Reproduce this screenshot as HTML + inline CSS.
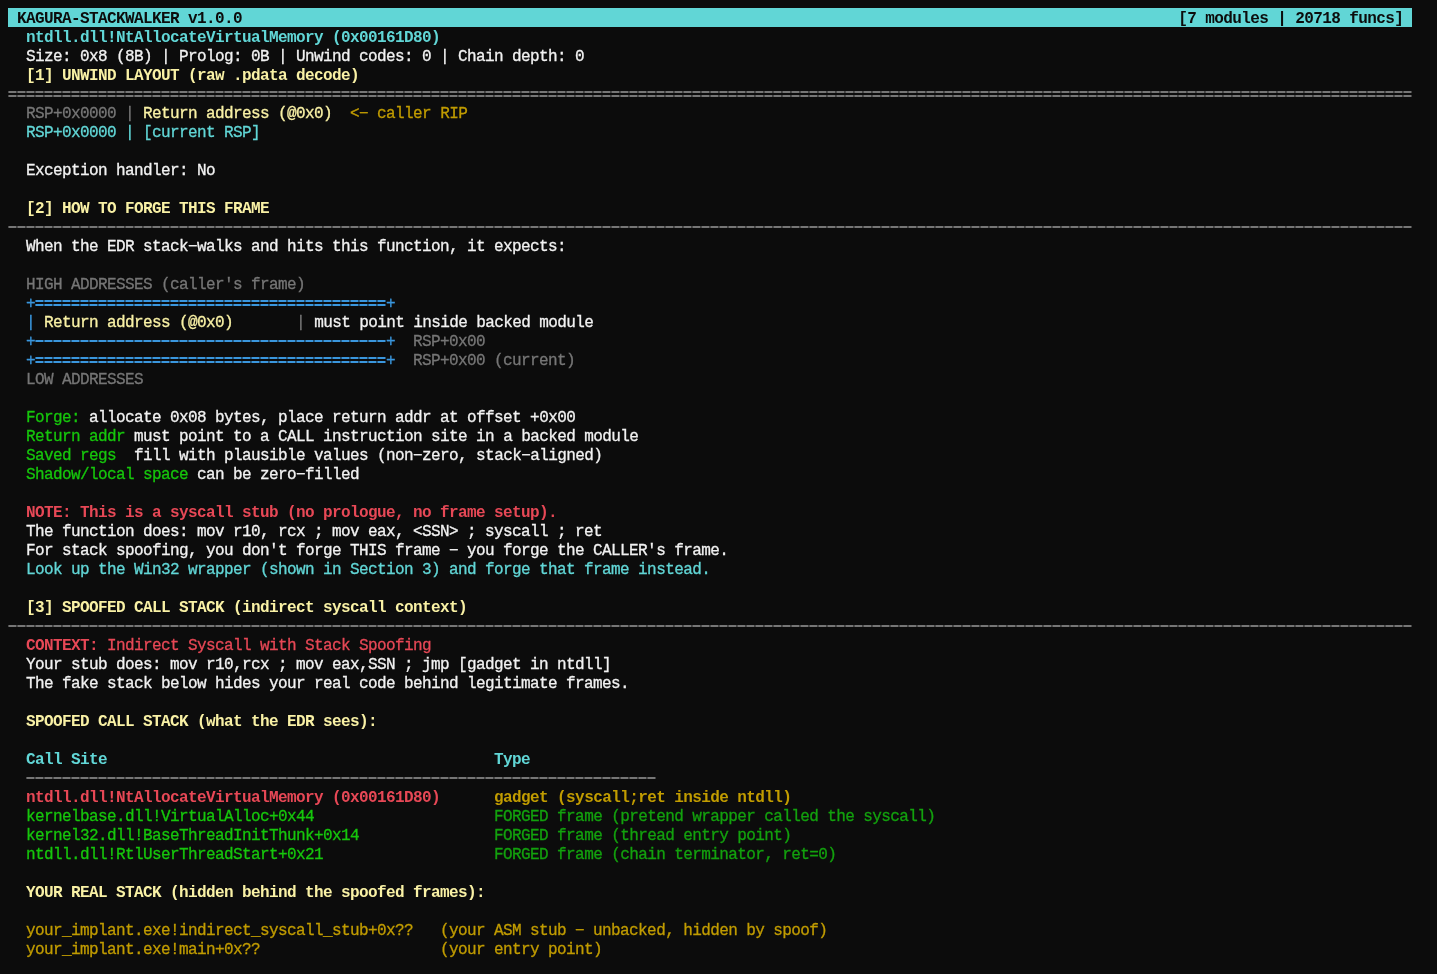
<!DOCTYPE html>
<html><head><meta charset="utf-8">
<style>
html,body{margin:0;padding:0;background:#0c0c0c;}
body{width:1437px;height:974px;overflow:hidden;position:relative;}
#t{position:absolute;left:8px;top:8px;font-family:"Liberation Mono",monospace;font-size:16px;letter-spacing:-0.6px;color:#cccccc;will-change:transform;-webkit-text-stroke:0.3px currentColor;}
.r{height:19px;line-height:23px;white-space:pre;}
b{font-weight:bold;-webkit-text-stroke:0;}
.bar{background:#61d6d6;color:#0c0c0c;display:inline-block;height:19px;vertical-align:top;}
.bc{color:#61d6d6;}
.w{color:#f2f2f2;}
.by{color:#f9f1a5;}
.y{color:#c19c00;}
.g{color:#767676;}
.gr{color:#13a10e;}
.bg{color:#16c60c;}
.br{color:#e74856;}
.bl{color:#3a96dd;}
.sepeq,.sepd{display:inline-block;height:19px;vertical-align:top;}
.sepeq{background:
  repeating-linear-gradient(90deg, #4c4c4c 0 1px, #767676 1px 8px, #414141 8px 9px) 0 7px/100% 2px no-repeat,
  repeating-linear-gradient(90deg, #4c4c4c 0 1px, #767676 1px 8px, #414141 8px 9px) 0 11px/100% 2px no-repeat;}
.sepd{background:
  repeating-linear-gradient(90deg, #4c4c4c 0 1px, #767676 1px 8px, #414141 8px 9px) 0 9px/100% 2px no-repeat;}
.sepeq.bl1{background:
  repeating-linear-gradient(90deg, #275f89 0 1px, #3a96dd 1px 8px, #235175 8px 9px) 0 7px/100% 2px no-repeat,
  repeating-linear-gradient(90deg, #275f89 0 1px, #3a96dd 1px 8px, #235175 8px 9px) 0 11px/100% 2px no-repeat;}
.sepd.bl1{background:
  repeating-linear-gradient(90deg, #275f89 0 1px, #3a96dd 1px 8px, #235175 8px 9px) 0 9px/100% 2px no-repeat;}
</style></head><body><div id="t">
<div class="r"><span class="bar"> <b>KAGURA-STACKWALKER v1.0.0</b>                                                                                                        <b>[7 modules | 20718 funcs]</b> </span></div>
<div class="r">  <b class="bc">ntdll.dll!NtAllocateVirtualMemory (0x00161D80)</b></div>
<div class="r">  <span class="w">Size: 0x8 (8B) | Prolog: 0B | Unwind codes: 0 | Chain depth: 0</span></div>
<div class="r">  <b class="by">[1] UNWIND LAYOUT (raw .pdata decode)</b></div>
<div class="r"><span class="sepeq" style="width:1404px"></span></div>
<div class="r">  <span class="g">RSP+0x0000 | </span><span class="by">Return address (@0x0)</span>  <span class="y">&lt;− caller RIP</span></div>
<div class="r">  <span class="bc">RSP+0x0000 | [current RSP]</span></div>
<div class="r"></div>
<div class="r">  <span class="w">Exception handler: No</span></div>
<div class="r"></div>
<div class="r">  <b class="by">[2] HOW TO FORGE THIS FRAME</b></div>
<div class="r"><span class="sepd" style="width:1404px"></span></div>
<div class="r">  <span class="w">When the EDR stack−walks and hits this function, it expects:</span></div>
<div class="r"></div>
<div class="r">  <span class="g">HIGH ADDRESSES (caller's frame)</span></div>
<div class="r">  <span class="bl">+</span><span class="sepeq bl1" style="width:351px"></span><span class="bl">+</span></div>
<div class="r">  <span class="bl">|</span> <span class="by">Return address (@0x0)</span>       <span class="g">|</span> <span class="w">must point inside backed module</span></div>
<div class="r">  <span class="bl">+</span><span class="sepd bl1" style="width:351px"></span><span class="bl">+</span>  <span class="g">RSP+0x00</span></div>
<div class="r">  <span class="bl">+</span><span class="sepeq bl1" style="width:351px"></span><span class="bl">+</span>  <span class="g">RSP+0x00 (current)</span></div>
<div class="r">  <span class="g">LOW ADDRESSES</span></div>
<div class="r"></div>
<div class="r">  <span class="bg">Forge:</span> <span class="w">allocate 0x08 bytes, place return addr at offset +0x00</span></div>
<div class="r">  <span class="bg">Return addr</span> <span class="w">must point to a CALL instruction site in a backed module</span></div>
<div class="r">  <span class="bg">Saved regs</span>  <span class="w">fill with plausible values (non−zero, stack−aligned)</span></div>
<div class="r">  <span class="bg">Shadow/local space</span> <span class="w">can be zero−filled</span></div>
<div class="r"></div>
<div class="r">  <b class="br">NOTE: This is a syscall stub (no prologue, no frame setup).</b></div>
<div class="r">  <span class="w">The function does: mov r10, rcx ; mov eax, &lt;SSN&gt; ; syscall ; ret</span></div>
<div class="r">  <span class="w">For stack spoofing, you don't forge THIS frame − you forge the CALLER's frame.</span></div>
<div class="r">  <span class="bc">Look up the Win32 wrapper (shown in Section 3) and forge that frame instead.</span></div>
<div class="r"></div>
<div class="r">  <b class="by">[3] SPOOFED CALL STACK (indirect syscall context)</b></div>
<div class="r"><span class="sepd" style="width:1404px"></span></div>
<div class="r">  <b class="br">CONTEXT:</b> <span class="br">Indirect Syscall with Stack Spoofing</span></div>
<div class="r">  <span class="w">Your stub does: mov r10,rcx ; mov eax,SSN ; jmp [gadget in ntdll]</span></div>
<div class="r">  <span class="w">The fake stack below hides your real code behind legitimate frames.</span></div>
<div class="r"></div>
<div class="r">  <b class="by">SPOOFED CALL STACK (what the EDR sees):</b></div>
<div class="r"></div>
<div class="r">  <b class="bc">Call Site                                           Type</b></div>
<div class="r">  <span class="sepd" style="width:630px"></span></div>
<div class="r">  <b class="br">ntdll.dll!NtAllocateVirtualMemory (0x00161D80)      </b><b class="y">gadget (syscall;ret inside ntdll)</b></div>
<div class="r">  <span class="bg">kernelbase.dll!VirtualAlloc+0x44                    </span><span class="gr">FORGED frame (pretend wrapper called the syscall)</span></div>
<div class="r">  <span class="bg">kernel32.dll!BaseThreadInitThunk+0x14               </span><span class="gr">FORGED frame (thread entry point)</span></div>
<div class="r">  <span class="bg">ntdll.dll!RtlUserThreadStart+0x21                   </span><span class="gr">FORGED frame (chain terminator, ret=0)</span></div>
<div class="r"></div>
<div class="r">  <b class="by">YOUR REAL STACK (hidden behind the spoofed frames):</b></div>
<div class="r"></div>
<div class="r">  <span class="y">your_implant.exe!indirect_syscall_stub+0x??   (your ASM stub − unbacked, hidden by spoof)</span></div>
<div class="r">  <span class="y">your_implant.exe!main+0x??                    (your entry point)</span></div>
</div></body></html>
